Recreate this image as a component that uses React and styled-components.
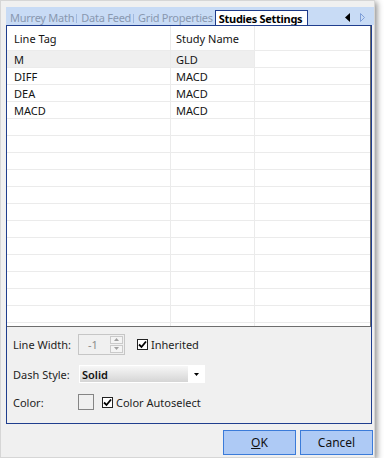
import React from "react";
import styled, { createGlobalStyle } from "styled-components";

const GlobalStyle = createGlobalStyle`
  html, body { margin: 0; padding: 0; background: #ffffff; }
  body { font-family: "Noto Sans", "Open Sans", sans-serif; font-size: 11px; color: #1e1e1e; }
  * { box-sizing: border-box; }
`;

const Window = styled.div`
  width: 375px;
  height: 458px;
  background: #f0f0f0;
  border: 1px solid #d6d6d6;
  box-shadow: 2px 2px 6px rgba(0, 0, 0, 0.45);
  display: flex;
  flex-direction: column;
  padding: 6px 0 2px 5px;
`;

const TabStrip = styled.div`
  height: 18px;
  background: #c8dbf5;
  display: flex;
  align-items: flex-end;
  padding-left: 4px;
  position: relative;
`;

const Tab = styled.div`
  height: ${(p) => (p.$active ? "15px" : "18px")};
  width: ${(p) => (p.$active ? "93px" : "auto")};
  flex-shrink: 0;
  display: flex;
  align-items: center;
  padding: ${(p) => (p.$active ? "1px 0 0 3px" : "2px 0 0 0")};
  margin-right: ${(p) => (p.$active ? "0" : "2px")};
  color: ${(p) => (p.$active ? "#000" : "#8898b0")};
  font-weight: ${(p) => (p.$active ? 700 : 400)};
  letter-spacing: ${(p) => (p.$active ? "-0.3px" : "-0.25px")};
  background: ${(p) => (p.$active ? "#ffffff" : "transparent")};
  border: ${(p) => (p.$active ? "1px solid #1d3a8a" : "none")};
  border-bottom: none;
  white-space: nowrap;
  overflow: hidden;
  max-width: ${(p) => p.$max || "none"};
`;

const Sep = styled.span`
  width: 1px;
  height: 9px;
  flex-shrink: 0;
  background: #9fb8de;
  align-self: center;
  margin: 4px 4px 0 0;
`;

const Arrows = styled.div`
  margin-left: auto;
  margin-right: 9px;
  align-self: center;
  display: flex;
  gap: 10px;
  padding-top: 2px;
`;

const Panel = styled.div`
  width: 366px;
  height: 399px;
  border: 1px solid #1f3e8e;
  display: flex;
  flex-direction: column;
`;

const GridBox = styled.div`
  height: 301px;
  background: #ffffff;
  border-right: 1px solid #6e6e6e;
  border-bottom: 1px solid #6e6e6e;
  overflow: hidden;
`;

const Row = styled.div`
  display: grid;
  grid-template-columns: 164px 84px 1fr;
  height: ${(p) => (p.$header ? "25px" : "17px")};
`;

const Cell = styled.div`
  display: flex;
  align-items: center;
  padding-left: ${(p) => (p.$first ? "7px" : "5px")};
  border-right: ${(p) => (p.$last ? "none" : "1px solid #ebebeb")};
  border-bottom: 1px solid #ebebeb;
  background: ${(p) => (p.$hl ? "#efefef" : "#ffffff")};
  color: #141414;
  white-space: nowrap;
`;

const Settings = styled.div`
  flex: 1;
  display: grid;
  grid-template-columns: 65px 1fr;
  grid-template-rows: 28px 32px 24px;
  padding: 3px 0 0 6px;
  align-items: center;
`;

const Label = styled.div`
  color: #1e1e1e;
`;

const Controls = styled.div`
  display: flex;
  align-items: center;
`;

const SpinBox = styled.div`
  width: 47px;
  height: 21px;
  border: 1px solid #c6c6c6;
  display: flex;
  align-items: center;
  justify-content: space-between;
  padding: 0 1px 0 9px;
  color: #8c8c8c;
  margin-right: 12px;
`;

const SpinButtons = styled.div`
  display: flex;
  flex-direction: column;
  gap: 1px;
`;

const SpinButton = styled.div`
  width: 13px;
  height: 8px;
  border: 1px solid #cacaca;
  background: #f4f4f4;
  display: flex;
  align-items: center;
  justify-content: center;
`;

const CheckRow = styled.label`
  display: flex;
  align-items: center;
  gap: 3px;
  color: #1e1e1e;
`;

const Box = styled.span`
  width: 11px;
  height: 11px;
  border: 1px solid #222;
  background: #fff;
  display: flex;
  align-items: center;
  justify-content: center;
`;

const Dropdown = styled.div`
  width: 126px;
  height: 18px;
  border: 1px solid #ffffff;
  display: flex;
  margin-left: 1px;
`;

const DropValue = styled.div`
  flex: 1;
  background: linear-gradient(#f7f7f7, #d5d5d5);
  display: flex;
  align-items: center;
  padding-left: 2px;
  font-weight: 600;
  color: #111;
`;

const DropButton = styled.div`
  width: 16px;
  background: #ffffff;
  display: flex;
  align-items: center;
  justify-content: center;
`;

const Swatch = styled.div`
  width: 16px;
  height: 16px;
  border: 1px solid #858585;
  margin-right: 8px;
`;

const ButtonBar = styled.div`
  display: flex;
  justify-content: flex-end;
  gap: 4px;
  margin-top: 6px;
  padding-right: 1px;
`;

const Button = styled.button`
  width: 73px;
  height: 25px;
  background: #aecaf5;
  border: 1px solid #3b7bd9;
  font-family: "Noto Sans", "Open Sans", sans-serif;
  font-size: 12px;
  color: #111;
  padding: 0;
`;

const Check = () => (
  <svg width="9" height="9" viewBox="0 0 9 9">
    <path d="M1 4.5 L3.5 7 L8 1.5" fill="none" stroke="#000" strokeWidth="1.8" />
  </svg>
);

const Tri = ({ up }) => (
  <svg width="5" height="3" viewBox="0 0 5 3">
    <path d={up ? "M0 3 L2.5 0 L5 3 Z" : "M0 0 L2.5 3 L5 0 Z"} fill="#a0a0a0" />
  </svg>
);

const rows = [
  ["M", "GLD"],
  ["DIFF", "MACD"],
  ["DEA", "MACD"],
  ["MACD", "MACD"],
  ...Array.from({ length: 13 }, () => ["", ""]),
];

export default function App() {
  return (
    <>
      <GlobalStyle />
      <Window>
        <TabStrip>
          <Tab>Murrey Math</Tab>
          <Sep />
          <Tab>Data Feed</Tab>
          <Sep />
          <Tab $max="80px">Grid Properties</Tab>
          <Tab $active>Studies Settings</Tab>
          <Arrows>
            <svg width="5" height="9" viewBox="0 0 5 9">
              <path d="M5 0 L0 4.5 L5 9 Z" fill="#000" />
            </svg>
            <svg width="5" height="9" viewBox="0 0 5 9">
              <path d="M0.5 0.5 L4.5 4.5 L0.5 8.5 Z" fill="none" stroke="#7f9fd8" strokeWidth="1" />
            </svg>
          </Arrows>
        </TabStrip>
        <Panel>
          <GridBox>
            <Row $header>
              <Cell $first>Line Tag</Cell>
              <Cell>Study Name</Cell>
              <Cell $last />
            </Row>
            {rows.map(([a, b], i) => (
              <Row key={i}>
                <Cell $first $hl={i === 0}>{a}</Cell>
                <Cell $hl={i === 0}>{b}</Cell>
                <Cell $last />
              </Row>
            ))}
          </GridBox>
          <Settings>
            <Label>Line Width:</Label>
            <Controls>
              <SpinBox>
                <span>-1</span>
                <SpinButtons>
                  <SpinButton><Tri up /></SpinButton>
                  <SpinButton><Tri /></SpinButton>
                </SpinButtons>
              </SpinBox>
              <CheckRow>
                <Box><Check /></Box>
                Inherited
              </CheckRow>
            </Controls>
            <Label>Dash Style:</Label>
            <Controls>
              <Dropdown>
                <DropValue>Solid</DropValue>
                <DropButton>
                  <svg width="5" height="3" viewBox="0 0 5 3">
                    <path d="M0 0 L2.5 3 L5 0 Z" fill="#000" />
                  </svg>
                </DropButton>
              </Dropdown>
            </Controls>
            <Label>Color:</Label>
            <Controls>
              <Swatch />
              <CheckRow>
                <Box><Check /></Box>
                Color Autoselect
              </CheckRow>
            </Controls>
          </Settings>
        </Panel>
        <ButtonBar>
          <Button><u>O</u>K</Button>
          <Button>Cancel</Button>
        </ButtonBar>
      </Window>
    </>
  );
}
